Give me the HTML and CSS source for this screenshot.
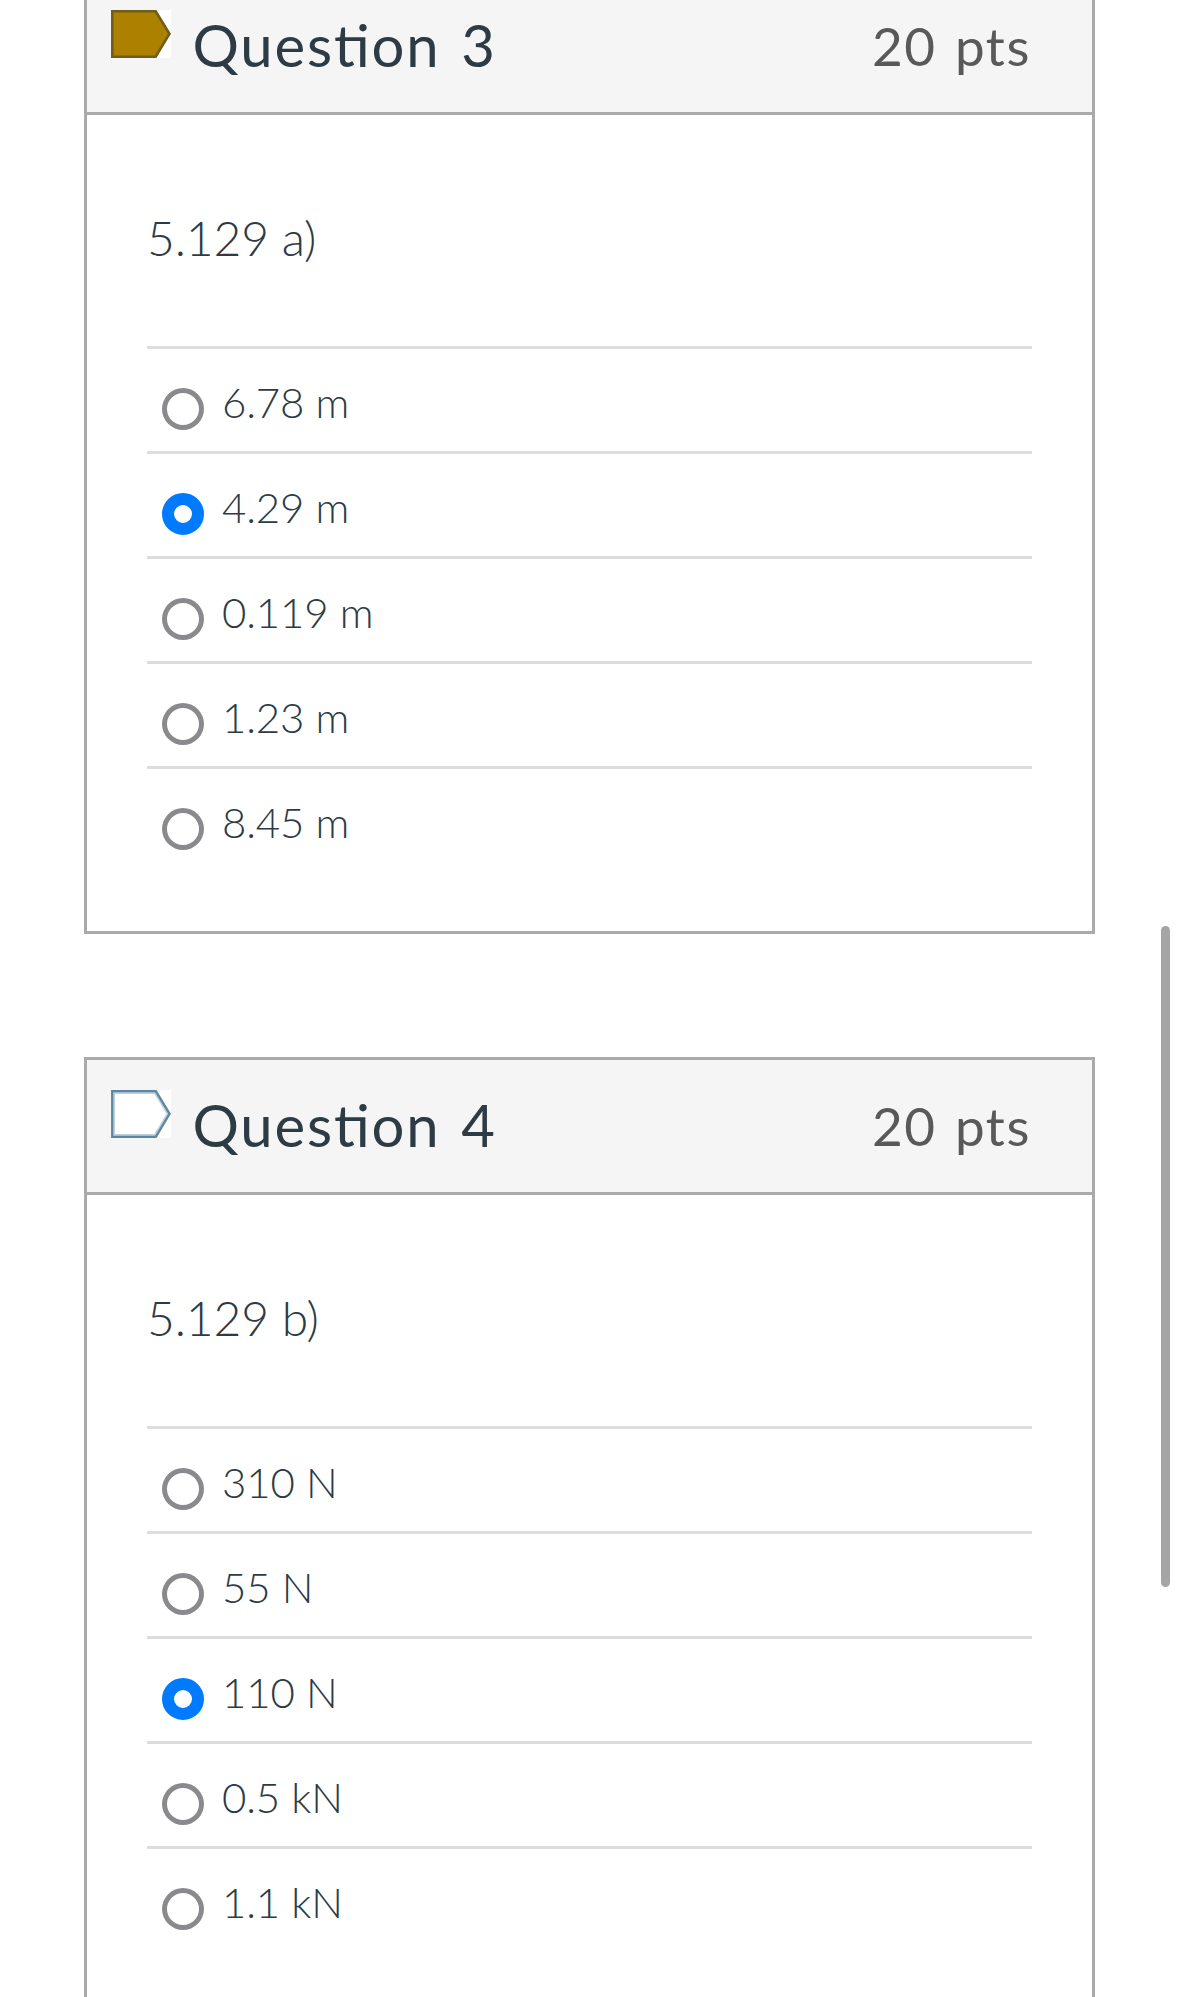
FILE: index.html
```html
<!DOCTYPE html>
<html lang="en"><head><meta charset="utf-8"><title>Quiz</title><link rel="stylesheet" href="styles.css"></head>
<body>
<main class="quiz">
<section class="question">
<header class="head"><svg class="flag" width="60" height="48" viewBox="0 0 60 48"><path fill="#fff" d="M45 0h15v48H45z"/><path d="M1.300 1.300H44.700L58.500 23.700 44.700 46.700H1.300z" fill="#ad8100" stroke="#725c1c" stroke-width="2.600"/></svg><h2 class="title">Question 3</h2><span class="points">20 pts</span></header>
<div class="body"><p class="prompt">5.129 a)</p>
<div class="answers">
<label class="answer"><input type="radio" name="q3"><span>6.78 m</span></label>
<label class="answer"><input type="radio" name="q3" checked><span>4.29 m</span></label>
<label class="answer"><input type="radio" name="q3"><span>0.119 m</span></label>
<label class="answer"><input type="radio" name="q3"><span>1.23 m</span></label>
<label class="answer"><input type="radio" name="q3"><span>8.45 m</span></label>
</div></div>
</section>
<section class="question">
<header class="head"><svg class="flag" width="60" height="48" viewBox="0 0 60 48"><path fill="#fff" d="M0 0h60v48H0z"/><path d="M2 2H44.500L57.800 23.700 44.500 46H2z" fill="none" stroke="#bed0dc" stroke-width="4"/><path d="M1.200 1.200H44.800L58.500 23.700 44.800 46.800H1.200z" fill="none" stroke="#5b87a2" stroke-width="2.200"/></svg><h2 class="title">Question 4</h2><span class="points">20 pts</span></header>
<div class="body"><p class="prompt">5.129 b)</p>
<div class="answers">
<label class="answer"><input type="radio" name="q4"><span>310 N</span></label>
<label class="answer"><input type="radio" name="q4"><span>55 N</span></label>
<label class="answer"><input type="radio" name="q4" checked><span>110 N</span></label>
<label class="answer"><input type="radio" name="q4"><span>0.5 kN</span></label>
<label class="answer"><input type="radio" name="q4"><span>1.1 kN</span></label>
</div></div>
</section>
</main>
<div class="scrollbar"></div>
</body></html>
```
FILE: styles.css
```css
* { box-sizing: border-box; }
html { overflow: hidden; }
body { margin: 0; height: 1997px; overflow: hidden; position: relative; background: #fff; color: #2d3b45; font-family: Lato, sans-serif; font-weight: 300; }
.quiz { padding: 0 84px; margin-top: -23px; }
.question { width: 1011px; height: 957px; border: 3px solid #aaa; margin-bottom: 123px; }
.head { display: flex; height: 135px; padding: 0 61px 0 24px; background: #f5f5f5; border-bottom: 3px solid #aaa; }
.flag { margin-top: 30px; flex: none; }
.title { margin: 30px 0 0 21.5px; font-size: 58px; line-height: 70px; font-weight: 400; letter-spacing: 1.85px; word-spacing: 4px; font-feature-settings: "liga" 1; }
.points { margin: 31px 0 0 auto; font-size: 53px; line-height: 70px; font-weight: 400; color: #595959; letter-spacing: 1.6px; word-spacing: 3px; }
.body { padding: 87px 60px 0; }
.prompt { margin: 0 0 72px; font-size: 48px; line-height: 72px; letter-spacing: -0.15px; }
.answer { display: flex; align-items: flex-start; height: 105px; border-top: 3px solid #ddd; padding: 39px 0 0 15px; font-size: 42px; line-height: 60px; letter-spacing: -0.15px; }
.answer span { margin: -16px 0 0 18px; }
.answer input { appearance: none; flex: none; width: 42px; height: 42px; margin: 0; border-radius: 50%; background: #fff; box-shadow: inset 0 0 0 5px #8a8a8e; }
.answer input:checked { box-shadow: none; border: 12px solid #007aff; }
.scrollbar { position: absolute; left: 1161px; top: 926px; width: 9px; height: 661px; border-radius: 5px; background: #a5a5a5; }
```
